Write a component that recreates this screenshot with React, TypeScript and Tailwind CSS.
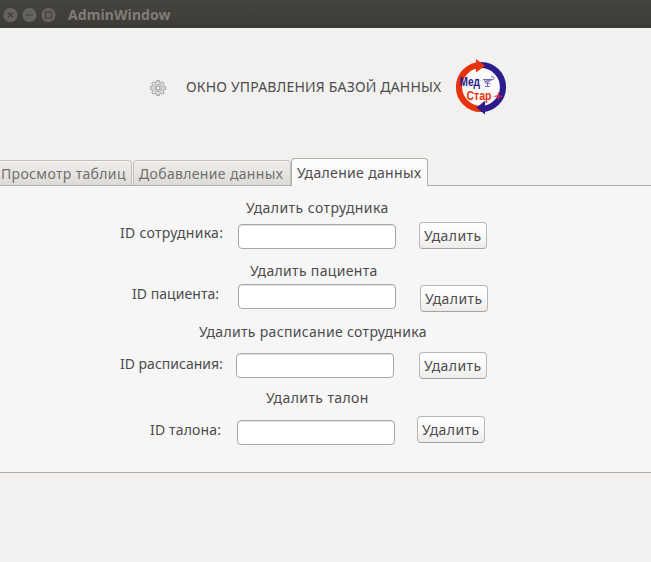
import React from "react";

type Section = {
  title: string;
  label: string;
  titleClass: string;
  rowClass: string;
  labelClass: string;
  inputClass: string;
  buttonClass: string;
};

const sections: Section[] = [
  {
    title: "Удалить сотрудника",
    label: "ID сотрудника:",
    titleClass: "ml-[246px] tracking-[0.44px]",
    rowClass: "h-[43px] pl-[120px]",
    labelClass: "mt-[5px] w-[118px] tracking-[0.3px]",
    inputClass: "mt-[6px]",
    buttonClass: "mt-[4px] ml-[23px]",
  },
  {
    title: "Удалить пациента",
    label: "ID пациента:",
    titleClass: "ml-[250px] tracking-[0.33px]",
    rowClass: "h-[41px] pl-[132px]",
    labelClass: "mt-[3px] w-[106px] tracking-[0.05px]",
    inputClass: "mt-[3px]",
    buttonClass: "mt-[4px] ml-[24px]",
  },
  {
    title: "Удалить расписание сотрудника",
    label: "ID расписания:",
    titleClass: "ml-[199px] tracking-[0.32px]",
    rowClass: "h-[46px] pl-[120px]",
    labelClass: "mt-[12px] w-[116px]",
    inputClass: "mt-[11px]",
    buttonClass: "mt-[10px] ml-[25px]",
  },
  {
    title: "Удалить талон",
    label: "ID талона:",
    titleClass: "ml-[266px] tracking-[0.4px]",
    rowClass: "h-[46px] pl-[150px]",
    labelClass: "mt-[12px] w-[87px] tracking-[0.15px]",
    inputClass: "mt-[12px]",
    buttonClass: "mt-[8px] ml-[22px]",
  },
];

function TitleBar() {
  return (
    <header className="flex h-7 items-center bg-linear-to-b from-[#46443f] to-[#3c3b37] pl-[3px] pt-px">
      <svg width="54" height="16" viewBox="0 0 54 16" fill="none">
        <g fill="#65635d" stroke="#35342f" strokeWidth="0.6">
          <circle cx="7.5" cy="8" r="7.6" />
          <circle cx="26.5" cy="8" r="7.6" />
          <circle cx="45.5" cy="8" r="7.6" />
        </g>
        <g stroke="#403f3a" strokeWidth="1.2">
          <path d="M5 5.5l5 5M10 5.5l-5 5M23 8h7" />
          <rect x="42.5" y="5" width="6" height="6" />
        </g>
      </svg>
      <span className="ml-[11px] text-[14px] leading-5 font-bold tracking-[0.1px] text-[#807d78]">AdminWindow</span>
    </header>
  );
}

function Gear() {
  return (
    <svg className="mt-[30px] ml-[150px]" width="16" height="16" viewBox="0 0 16 16">
      <path
        d="M6.6.6h2.8l.4 2 1.2.5 1.7-1.2 1.6 1.7-1.1 1.7.5 1.2 1.9.3v2.5l-1.9.4-.5 1.2 1.1 1.7-1.7 1.7-1.7-1.2-1.2.5-.4 1.9H6.6l-.4-1.9-1.2-.5-1.7 1.2-1.7-1.7 1.2-1.7-.5-1.2-1.9-.4V6.8l1.9-.3.5-1.2-1.2-1.7 1.7-1.7L5 3.1l1.2-.5z"
        fill="#dddddc"
        stroke="#979796"
        strokeWidth="0.9"
      />
      <circle cx="8" cy="8" r="3.7" fill="#c9c9c8" stroke="#b0b0af" strokeWidth="0.8" />
      <circle cx="8" cy="8" r="1.8" fill="#f2f1f0" stroke="#a0a09f" strokeWidth="0.8" />
    </svg>
  );
}

function Logo() {
  return (
    <svg className="mt-[9px] ml-[13px]" width="52" height="56" viewBox="0 0 52 56">
      <circle cx="26" cy="28" r="20" fill="#fbfafa" />
      <path d="M26 6A22 22 0 0 0 26 50" fill="none" stroke="#e8320c" strokeWidth="6.2" />
      <path d="M26 6A22 22 0 0 1 26 50" fill="none" stroke="#2b1c8c" strokeWidth="6.2" />
      <path d="M21 0L30 6.8L21 13.6z" fill="#e8320c" />
      <path d="M30 41.8L21.5 48.6L30 55.4z" fill="#2b1c8c" />
      <text x="4.5" y="27" textLength="20.5" lengthAdjust="spacingAndGlyphs" fill="#2b1c8c" fontFamily="Liberation Sans, sans-serif" fontWeight="700" fontSize="13">Мед</text>
      <text x="11.5" y="40.5" textLength="25" lengthAdjust="spacingAndGlyphs" fill="#e8320c" fontFamily="Liberation Sans, sans-serif" fontWeight="700" fontSize="13.5">Стар</text>
      <g fill="none" stroke="#7268b2" strokeWidth="1">
        <path d="M28 20.5h9M28.5 20.5q4 5 8 0M32.5 23v4M30 27.5h5M36 17.8c4-.6 4 2.6 1 3s-8 1-7 2.6 6 0 5 2.1" />
      </g>
      <path d="M38 37.2l4.4-.9.9-3.8.9 3.8 4.6.9-4.6.9-.9 3.6-.9-3.6z" fill="#e8203c" />
    </svg>
  );
}

function Tabs() {
  const idle =
    "mt-[2px] h-[25px] border border-b-0 border-[#c2bfbb] bg-linear-to-b from-[#efeeec] to-[#dddbd8] pt-[3px] text-[#72706d] shadow-[inset_0_1px_0_#f8f7f6]";
  return (
    <nav className="flex h-[28px] items-start tracking-[0.34px]">
      <div className={`${idle} w-[132px] rounded-tr-[4px] border-l-0 pl-px`}>Просмотр таблиц</div>
      <div className={`${idle} ml-px w-[158px] rounded-t-[4px] pl-[5px]`}>Добавление данных</div>
      <div className="relative z-10 h-[28px] w-[137px] rounded-t-[4px] border border-b-0 border-[#b2afab] bg-linear-to-b from-[#fdfdfd] to-[#f6f6f6] pt-[4px] pl-[5px]">
        Удаление данных
      </div>
    </nav>
  );
}

function DeleteSection({ s }: { s: Section }) {
  return (
    <section>
      <h2 className={`${s.titleClass} h-5`}>{s.title}</h2>
      <div className={`${s.rowClass} flex items-start`}>
        <label className={`${s.labelClass} shrink-0`}>{s.label}</label>
        <input
          aria-label={s.label}
          className={`${s.inputClass} h-[25px] w-[158px] rounded-[4px] border border-[#aaa6a1] bg-white shadow-[inset_0_1px_0_#e6e4e2] outline-none`}
        />
        <button
          className={`${s.buttonClass} h-[27px] w-[68px] rounded-[4px] border border-[#bbb8b4] border-b-[#a7a39f] bg-linear-to-b from-[#ffffff] via-[#f9f9f9] to-[#eeeceb] pl-1 text-left tracking-[0.43px]`}
        >
          Удалить
        </button>
      </div>
    </section>
  );
}

export default function App() {
  return (
    <main className="h-[562px] w-[651px] overflow-hidden bg-[#f2f1f0] font-['Noto_Sans',sans-serif] text-[14px] leading-5 whitespace-nowrap text-[#4c4c4c]">
      <TitleBar />
      <div className="flex h-[130px] items-start pt-[22px]">
        <Gear />
        <h1 className="mt-[27px] ml-[20px] w-[256px] tracking-[0.18px]">ОКНО УПРАВЛЕНИЯ БАЗОЙ ДАННЫХ</h1>
        <Logo />
      </div>
      <Tabs />
      <div className="-mt-px h-[288px] border-y border-[#b2afab] bg-[#f6f6f6] pt-[12px]">
        {sections.map((s) => (
          <DeleteSection key={s.title} s={s} />
        ))}
      </div>
    </main>
  );
}
